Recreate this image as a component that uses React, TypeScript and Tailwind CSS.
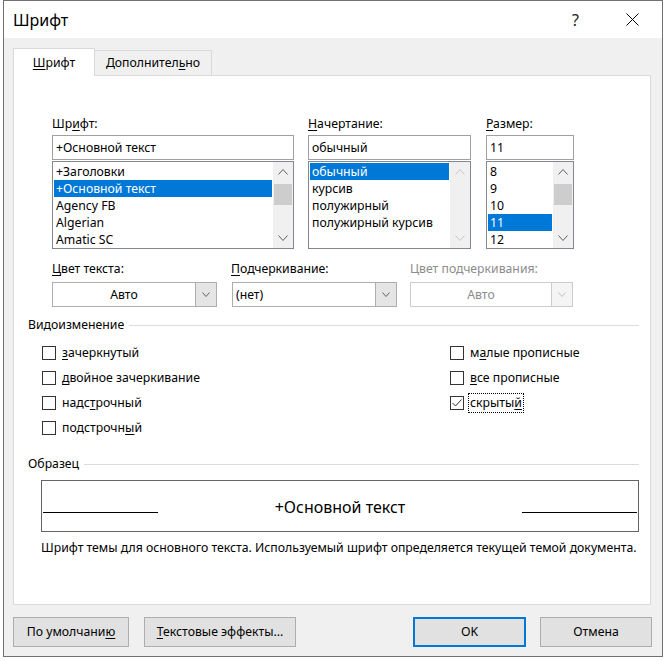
import React from 'react';

// text with an access key: the char after "&" is underlined
function Accel({ text }: { text: string }) {
  const i = text.indexOf('&');
  if (i < 0) return <>{text}</>;
  return (
    <>
      {text.slice(0, i)}
      <span className="underline underline-offset-[2px]">{text[i + 1]}</span>
      {text.slice(i + 2)}
    </>
  );
}

function Chevron({ up, color, small }: { up?: boolean; color: string; small?: boolean }) {
  const w = small ? 8 : 10;
  const h = small ? 5 : 6;
  const d = up
    ? `M0.5 ${h - 0.5} L${w / 2} 0.5 L${w - 0.5} ${h - 0.5}`
    : `M0.5 0.5 L${w / 2} ${h - 0.5} L${w - 0.5} 0.5`;
  return (
    <svg width={w} height={h} viewBox={`0 0 ${w} ${h}`}>
      <path d={d} fill="none" stroke={color} strokeWidth="1" />
    </svg>
  );
}

function ScrollBar({ disabled }: { disabled?: boolean }) {
  const c = disabled ? '#c6c6c6' : '#606060';
  return (
    <div className="w-[20px] bg-[#f0f0f0] flex flex-col">
      <div className="h-[20px] flex items-center justify-center">
        <Chevron up color={c} />
      </div>
      <div className="flex-1">
        {!disabled && <div className="mt-[2px] mx-[1px] h-[21px] bg-[#cdcdcd]" />}
      </div>
      <div className="h-[20px] flex items-center justify-center">
        <Chevron color={c} />
      </div>
    </div>
  );
}

function ListBox({ items, selected, disabledScroll }: { items: string[]; selected: number; disabledScroll?: boolean }) {
  return (
    <div className="mt-[1px] h-[88px] flex border border-[#828790] bg-white overflow-hidden">
      <div className="flex-1 pt-[1px] pl-[1px] pr-[1px] overflow-hidden">
        {items.map((it, i) => (
          <div
            key={it}
            className={`h-[17px] leading-[18px] pl-[2px] whitespace-nowrap ${
              i === selected ? 'bg-[#0078d7] text-white' : ''
            }`}
          >
            {it}
          </div>
        ))}
      </div>
      <ScrollBar disabled={disabledScroll} />
    </div>
  );
}

function TextBox({ value }: { value: string }) {
  return (
    <div className="h-[25px] border border-[#a0a0a0] bg-white flex items-center pl-[3px]">{value}</div>
  );
}

function Combo({ value, center, disabled }: { value: string; center?: boolean; disabled?: boolean }) {
  return (
    <div
      className={`h-[25px] flex border bg-white ${
        disabled ? 'border-[#cccccc] text-[#8c8c8c]' : 'border-[#adadad]'
      }`}
    >
      <div className={`flex-1 flex items-center ${center ? 'justify-center' : 'pl-[3px]'}`}>{value}</div>
      <div
        className={`w-[21px] flex items-center justify-center border-l ${
          disabled ? 'border-[#cccccc] bg-[#f4f4f4]' : 'border-[#adadad] bg-[#e5e5e5]'
        }`}
      >
        <Chevron small color={disabled ? '#c0c0c0' : '#606060'} />
      </div>
    </div>
  );
}

function CheckRow({ label, checked, focus }: { label: string; checked?: boolean; focus?: boolean }) {
  return (
    <div className="h-[25px] flex items-center">
      <div className="w-[14px] h-[14px] border border-[#333333] bg-white flex items-center justify-center">
        {checked && (
          <svg width="10" height="8" viewBox="0 0 10 8">
            <path d="M0.5 4 L3.5 7 L9.5 0.5" fill="none" stroke="#333333" strokeWidth="1" />
          </svg>
        )}
      </div>
      {focus ? (
        <span className="ml-[4px] px-[1px] leading-[18px] border border-dotted border-black">
          <Accel text={label} />
        </span>
      ) : (
        <span className="ml-[6px]">
          <Accel text={label} />
        </span>
      )}
    </div>
  );
}

function GroupTitle({ title }: { title: string }) {
  return (
    <div className="h-[16px] flex items-center">
      <span>{title}</span>
      <div className="flex-1 h-[1px] ml-[5px] bg-[#dcdcdc]" />
    </div>
  );
}

export default function App() {
  return (
    <div className="w-[667px] h-[661px] bg-white overflow-hidden [font-family:'Noto_Sans',sans-serif] text-[12.25px] leading-[16px] text-black">
      <div className="ml-[3px] w-[660px] h-[657px] border border-[#707070] flex flex-col bg-[#f0f0f0]">
        {/* Title bar */}
        <div className="h-[37px] bg-white flex items-center pl-[9px]">
          <span className="text-[16px]">Шрифт</span>
          <span className="ml-auto text-[16px] text-[#222]">?</span>
          <svg className="ml-[47px] mr-[23px]" width="13" height="13" viewBox="0 0 13 13">
            <path d="M0.5 0.5L12.5 12.5M12.5 0.5L0.5 12.5" stroke="#000" strokeWidth="1" />
          </svg>
        </div>

        <div className="flex-1 flex flex-col pl-[9px] pr-[11px] pt-[10px] pb-[9px]">
          {/* Tabs */}
          <div className="flex items-end relative z-10 -mb-[1px] h-[28px]">
            <div className="w-[82px] h-[28px] bg-white border border-b-0 border-[#d9d9d9] flex items-center justify-center">
              <Accel text="&Шрифт" />
            </div>
            <div className="w-[117px] h-[25px] mb-[1px] bg-[#f0f0f0] border border-l-0 border-b-0 border-[#d9d9d9] flex items-center justify-center">
              <Accel text="Дополнител&ьно" />
            </div>
          </div>

          {/* Panel */}
          <div className="flex-1 bg-white border border-[#d9d9d9] pt-[40px] pl-[14px] pr-[11px]">
            {/* Font / style / size */}
            <div className="ml-[24px] flex">
              <div className="w-[242px]">
                <div className="h-[16px] mb-[3px]"><Accel text="Шр&ифт:" /></div>
                <TextBox value="+Основной текст" />
                <ListBox items={['+Заголовки', '+Основной текст', 'Agency FB', 'Algerian', 'Amatic SC']} selected={1} />
              </div>
              <div className="w-[163px] ml-[14px]">
                <div className="h-[16px] mb-[3px]"><Accel text="&Начертание:" /></div>
                <TextBox value="обычный" />
                <ListBox items={['обычный', 'курсив', 'полужирный', 'полужирный курсив']} selected={0} disabledScroll />
              </div>
              <div className="w-[88px] ml-[15px]">
                <div className="h-[16px] mb-[3px]"><Accel text="&Размер:" /></div>
                <TextBox value="11" />
                <ListBox items={['8', '9', '10', '11', '12']} selected={3} />
              </div>
            </div>

            {/* Colour / underline */}
            <div className="ml-[24px] mt-[12px] flex">
              <div className="w-[165px]">
                <div className="h-[16px] mb-[5px]"><Accel text="&Цвет текста:" /></div>
                <Combo value="Авто" center />
              </div>
              <div className="w-[165px] ml-[15px]">
                <div className="h-[16px] mb-[5px] -ml-[1px]"><Accel text="&Подчеркивание:" /></div>
                <Combo value="(нет)" />
              </div>
              <div className="w-[163px] ml-[13px]">
                <div className="h-[16px] mb-[5px] text-[#8c8c8c]">Цвет подчеркивания:</div>
                <Combo value="Авто" center disabled />
              </div>
            </div>

            {/* Effects */}
            <div className="mt-[10px]">
              <GroupTitle title="Видоизменение" />
            </div>
            <div className="mt-[7px] ml-[14px] flex">
              <div className="w-[408px]">
                <CheckRow label="&зачеркнутый" />
                <CheckRow label="&двойное зачеркивание" />
                <CheckRow label="надс&трочный" />
                <CheckRow label="подстрочн&ый" />
              </div>
              <div>
                <CheckRow label="м&алые прописные" />
                <CheckRow label="&все прописные" />
                <CheckRow label="скрыты&й" checked focus />
              </div>
            </div>

            {/* Preview */}
            <div className="mt-[16px]">
              <GroupTitle title="Образец" />
            </div>
            <div className="mt-[8px] ml-[13px] w-[598px] h-[52px] border border-[#646464] flex items-center">
              <div className="w-[115px] h-[1px] bg-black ml-[1px] mt-[12px]" />
              <div className="flex-1 text-center text-[16px] leading-[20px] mt-[2px]">+Основной текст</div>
              <div className="w-[115px] h-[1px] bg-black mr-[1px] mt-[12px]" />
            </div>
            <div className="mt-[8px] ml-[13px] whitespace-nowrap">
              Шрифт темы для основного текста. Используемый шрифт определяется текущей темой документа.
            </div>
          </div>

          {/* Buttons */}
          <div className="mt-[12px] h-[30px] flex">
            <button className="w-[116px] h-full bg-[#e1e1e1] border border-[#adadad]">
              <Accel text="По умолчани&ю" />
            </button>
            <button className="w-[152px] h-full ml-[15px] bg-[#e1e1e1] border border-[#adadad]">
              <Accel text="&Текстовые эффекты..." />
            </button>
            <button className="w-[113px] h-full ml-auto bg-[#e1e1e1] border-2 border-[#0078d7]">OK</button>
            <button className="w-[112px] h-full ml-[14px] -mr-[1px] bg-[#e1e1e1] border border-[#adadad]">Отмена</button>
          </div>
        </div>
      </div>
    </div>
  );
}
